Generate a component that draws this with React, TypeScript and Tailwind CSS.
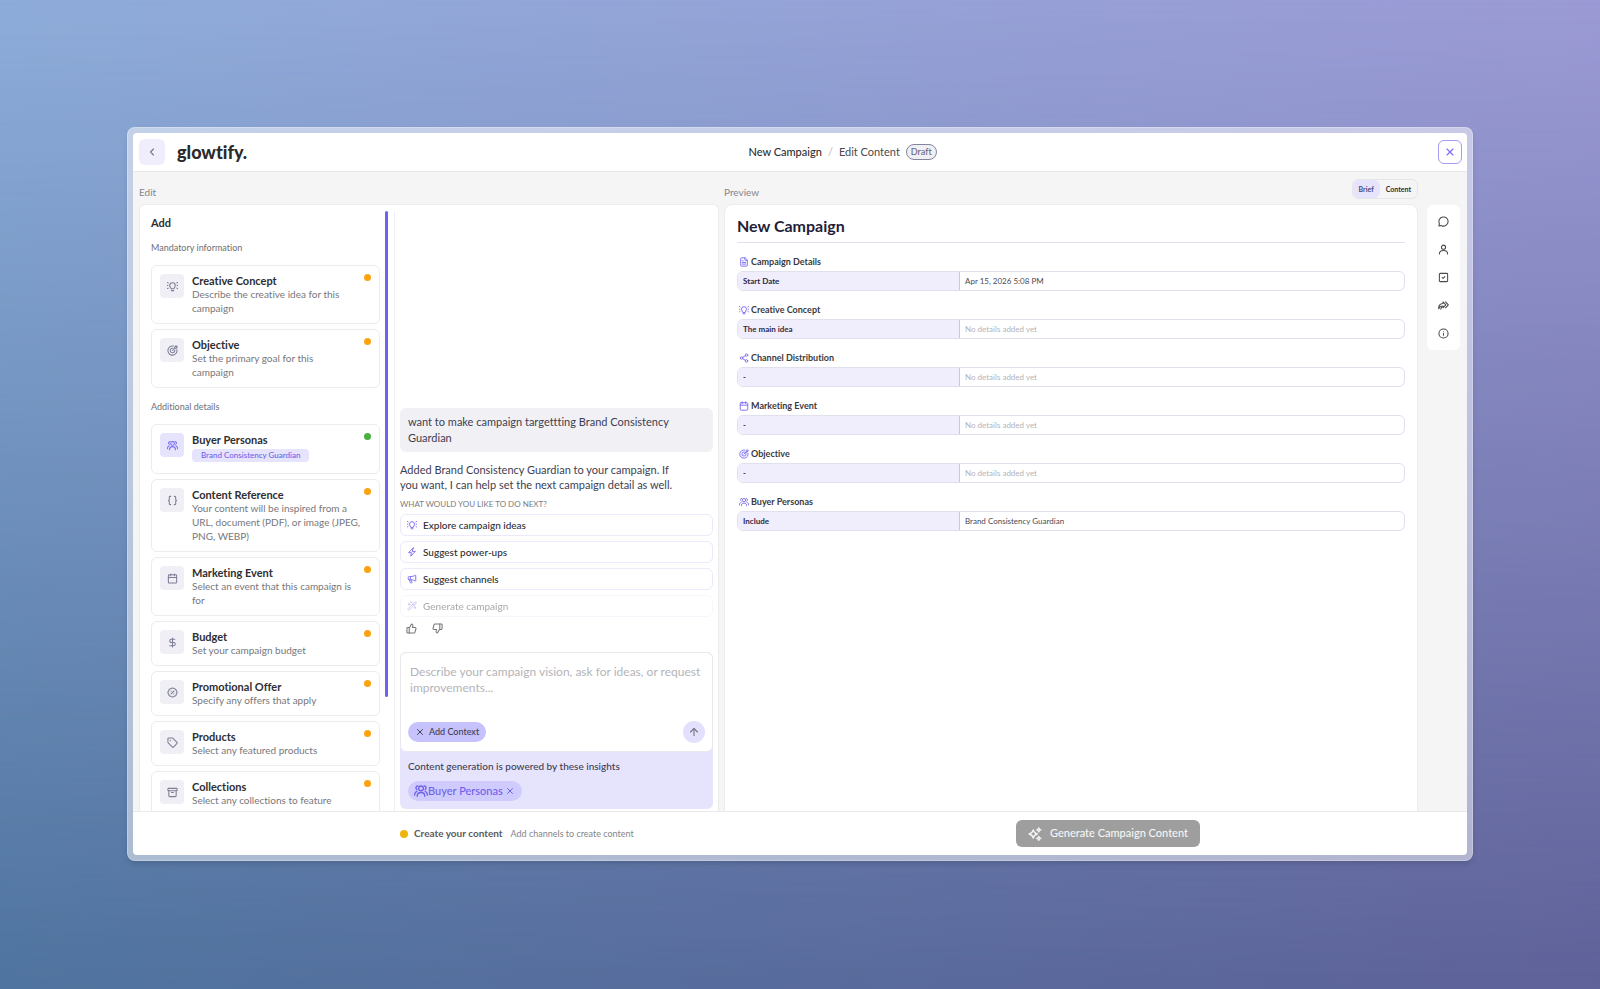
import React, {useState} from "react";
import {
    Archive,
    ArrowUp,
    BadgePercent,
    Braces,
    Calendar,
    ChevronLeft,
    DollarSign,
    FileText,
    Info,
    Megaphone,
    MessageCircle,
    Share2,
    SquareCheck,
    Tag,
    ThumbsDown,
    ThumbsUp,
    WandSparkles,
    X
} from "lucide-react";

type IconProps = { className?: string };
type IconType = React.ComponentType<IconProps>;

const Svg = ({className, children}: IconProps & { children: React.ReactNode }) => (
    <svg
        className={className}
        viewBox="0 0 24 24"
        fill="none"
        stroke="currentColor"
        strokeWidth={2}
        strokeLinecap="round"
        strokeLinejoin="round"
        aria-hidden="true"
    >
        {children}
    </svg>
);

const Bulb = ({className}: IconProps) => (
    <Svg className={className}>
        <path d="M9 17c0-2-3-3.200-3-7a6 6 0 0 1 12 0c0 3.800-3 5-3 7z"/>
        <path d="M9.500 21h5"/>
        <path d="M2.500 4.500 1 3.500M2 10H.5M2.500 15.500 1 16.500M21.500 4.500 23 3.500M22 10h1.500M21.500 15.500 23 16.500"/>
    </Svg>
);

const Goal = ({className}: IconProps) => (
    <Svg className={className}>
        <path d="M14 2.300A10 10 0 1 0 21.700 10"/>
        <path d="M13 7.100A5 5 0 1 0 16.900 11"/>
        <path d="m12 12 5-5M17 7V4l3-2.500V4h2.500L20 7z"/>
    </Svg>
);

const People = ({className}: IconProps) => (
    <Svg className={className}>
        <circle cx="12" cy="7.500" r="4"/>
        <path d="M5.500 21c0-4 2.500-6.500 6.500-6.500s6.500 2.500 6.500 6.500"/>
        <path d="M6.500 3.500a3.200 3.200 0 0 0-1.500 6M17.500 3.500a3.200 3.200 0 0 1 1.500 6"/>
        <path d="M5 12.500c-2.500.8-4 3-4 6.500M19 12.500c2.500.8 4 3 4 6.500"/>
    </Svg>
);

const Bolt = ({className}: IconProps) => (
    <Svg className={className}>
        <path d="M15 2 4 13.500h6.500L9 22l11-11.500h-6.500z"/>
    </Svg>
);

const Person = ({className}: IconProps) => (
    <Svg className={className}>
        <circle cx="12" cy="7" r="4.500"/>
        <path d="M3 22c0-5 3.500-8 9-8s9 3 9 8"/>
    </Svg>
);

const ForwardAll = ({className}: IconProps) => (
    <Svg className={className}>
        <path d="m11 4 6 6.500-6 6.500v-4c-5 0-8 2-9.500 6C1 12 4.500 8 11 7.500z"/>
        <path d="m16.500 4 6 6.500-6 6.500"/>
        <path d="M6 20c.5-2 1.500-3.500 3-4"/>
    </Svg>
);

const Sparkle = ({className}: IconProps) => (
    <Svg className={className}>
        <path d="M9 5c1 4 3 6 7 7-4 1-6 3-7 7-1-4-3-6-7-7 4-1 6-3 7-7z"/>
        <path d="M18.500 1.500c.5 2 1.500 3 3.500 3.500-2 .5-3 1.500-3.500 3.500C18 6.500 17 5.500 15 5c2-.5 3-1.500 3.500-3.500z"/>
        <path d="M18.500 16c.5 2 1.500 3 3.500 3.500-2 .5-3 1.500-3.500 3.500-.5-2-1.500-3-3.500-3.500 2-.5 3-1.500 3.500-3.500z"/>
    </Svg>
);

function InfoCard({item}: { item: CardItem }) {
    const Icon = item.icon;
    return (
        <button
            type="button"
            className="relative flex w-full shrink-0 items-start gap-2 rounded-md border border-[#ececef] bg-white p-2 text-left"
        >
            <span
                className={`flex size-6 shrink-0 items-center justify-center rounded ${item.chip ? "bg-[#e6e4fd] text-[#7c6ff0]" : "bg-[#efeff5] text-[#7d7d95]"}`}
            >
                <Icon className="size-[11px]"/>
            </span>
            <span className="min-w-0 flex-1 pr-2">
                <span className="block text-[11px] font-bold leading-[13px] text-[#2e2e33]">{item.title}</span>
                {item.chip ? (
                    <span
                        className="my-[3px] block w-fit rounded bg-[#e6e4fd] px-[9px] text-[8px] font-medium leading-[13px] text-[#6f62e8]">
                        {item.chip}
                    </span>
                ) : (
                    <span className="block text-[10px] leading-[14px] whitespace-pre-line text-[#77777c]">{item.text}</span>
                )}
            </span>
            <span
                className={`absolute top-2 right-2 size-[7px] rounded-full ${item.chip ? "bg-[#4caf3f]" : "bg-[#fba40f]"}`}/>
        </button>
    );
}

function BriefSection({section}: { section: Section }) {
    const Icon = section.icon;
    return (
        <section className="mb-2.5">
            <h3 className="flex h-[18px] items-center gap-[2px] pl-[2px] text-[9px] font-bold text-[#3a3a42]">
                <Icon className="size-[10px] text-[#7c6ff0]"/>
                {section.title}
            </h3>
            <table
                className="w-full table-fixed border-separate border-spacing-0 overflow-hidden rounded-md border border-[#e1e0ee] text-left text-[8px] leading-[18px]">
                <tbody>
                <tr>
                    <th scope="row"
                        className="w-1/3 border-r border-[#c9c5e6] bg-[#f0edfd] px-[5px] py-0 font-bold text-[#2c2a45]">
                        {section.label}
                    </th>
                    <td className={`px-[5px] py-0 ${section.value ? "text-[#4a4a55]" : "text-[#b4b4b8]"}`}>
                        {section.value ?? "No details added yet"}
                    </td>
                </tr>
                </tbody>
            </table>
        </section>
    );
}

export default function App() {
    const [tab, setTab] = useState("Brief");
    const [message, setMessage] = useState("");

    return (
        <main
            className="relative isolate flex h-screen bg-linear-to-r from-[#4f749f] to-[#5f6299] px-[127px] pt-[127px] pb-32 font-['Lato',sans-serif] [font-variant-ligatures:none] [&_svg]:stroke-[2.3]">
            <div
                className="absolute inset-0 -z-10 bg-linear-to-r from-[#8eacd9] to-[#9b9ad5] [mask-image:linear-gradient(to_bottom,black,transparent)]"/>
            <div className="flex min-w-0 flex-1 rounded-lg border border-white/25 bg-white/50 p-[5px] shadow-md">
                <div className="flex min-w-0 flex-1 flex-col overflow-hidden rounded bg-white">
                    <header
                        className="flex h-[39px] shrink-0 items-center justify-between border-b border-[#e9e9ea] pl-1.5 pr-[5px]">
                        <div className="flex items-center gap-3">
                            <button type="button" aria-label="Back"
                                    className="flex size-[26px] items-center justify-center rounded-md bg-[#f0edfd] text-[#77778a]">
                                <ChevronLeft className="size-3"/>
                            </button>
                            <a href="#" className="text-[18px] font-black leading-6 text-[#2b2b2b]">glowtify.</a>
                        </div>
                        <nav className="flex items-center gap-1.5 text-[11px] text-[#4a4a4f]">
                            <a href="#" className="font-medium text-[#2e2e33]">New Campaign</a>
                            <span className="text-[#b5b5bd]">/</span>
                            <span>Edit Content</span>
                            <span
                                className="rounded-full border border-[#85859a] bg-[#efeff6] px-1 text-[9px] font-medium leading-[14px] text-[#6a6a80]">
                                Draft
                            </span>
                        </nav>
                        <button type="button" aria-label="Close"
                                className="flex size-6 items-center justify-center rounded-md border border-[#a49cf3] text-[#7c6ff0]">
                            <X className="size-3"/>
                        </button>
                    </header>

                    <div className="flex min-h-0 flex-1 bg-[#f5f5f5] px-1.5">
                        <section className="flex w-[580px] shrink-0 flex-col">
                            <h2 className="h-8 shrink-0 pt-[13px] text-[10px] leading-[14px] text-[#85858a]">Edit</h2>
                            <div
                                className="flex min-h-0 flex-1 rounded-t-md border border-b-0 border-[#ececec] bg-white">
                                <div
                                    className="flex w-[240px] shrink-0 flex-col gap-[5px] overflow-hidden pl-[11px] pt-[10px]">
                                    <h3 className="text-[11px] font-bold leading-4 text-[#2e2e33]">Add</h3>
                                    <p className="mt-1.5 mb-1.5 text-[9px] leading-3 text-[#6f6f74]">Mandatory
                                        information</p>
                                    {mandatory.map((item) => <InfoCard key={item.title} item={item}/>)}
                                    <p className="mt-2 mb-1.5 text-[9px] leading-3 text-[#6f6f74]">Additional details</p>
                                    {additional.map((item) => <InfoCard key={item.title} item={item}/>)}
                                </div>
                                <div className="ml-[5px] mt-1.5 w-[10px] shrink-0 border-r border-[#f0f0f2]">
                                    <div className="h-[81%] w-[3px] rounded-full bg-[#6c63f0]"/>
                                </div>

                                <div className="flex min-w-0 flex-1 flex-col justify-end px-[5px] pb-[2px]">
                                    <p className="rounded-md bg-[#f0f0f5] px-2 py-1.5 text-[11px] leading-4 text-[#3e3e52]">
                                        want to make campaign targettting Brand Consistency Guardian
                                    </p>
                                    <p className="mt-[10px] pr-8 text-[11px] leading-[15px] text-[#3e3e52]">
                                        Added Brand Consistency Guardian to your campaign. If you want, I can help set
                                        the next campaign detail as well.
                                    </p>
                                    <p className="mt-1.5 mb-1 text-[8px] leading-3 text-[#7b7b80] uppercase">What would
                                        you like to do next?</p>
                                    <div className="flex flex-col gap-[5px]">
                                        {suggestions.map(({icon: Icon, title, disabled}) => (
                                            <button
                                                key={title}
                                                type="button"
                                                disabled={disabled}
                                                className="flex h-[22px] items-center gap-1.5 rounded-md border border-[#ebe9fa] px-1.5 text-[10px] font-medium text-[#2e2e33] disabled:opacity-40"
                                            >
                                                <Icon className="size-[10px] text-[#7c6ff0]"/>
                                                {title}
                                            </button>
                                        ))}
                                    </div>
                                    <div className="mt-1.5 mb-[18px] flex gap-[15px] pl-1.5 text-[#77777c]">
                                        <button type="button" aria-label="Good answer">
                                            <ThumbsUp className="size-[11px]"/>
                                        </button>
                                        <button type="button" aria-label="Bad answer">
                                            <ThumbsDown className="size-[11px]"/>
                                        </button>
                                    </div>

                                    <div className="rounded-md bg-[#e6e4fd]">
                                        <div
                                            className="rounded-md border border-[#e8e8ee] bg-white px-[7px] pt-[11px] pb-2">
                                            <textarea
                                                aria-label="Campaign vision"
                                                value={message}
                                                onChange={(e) => setMessage(e.target.value)}
                                                placeholder="Describe your campaign vision, ask for ideas, or request improvements..."
                                                className="block h-[57px] w-full resize-none px-0.5 text-[12px] leading-4 placeholder-[#b4b4b8] outline-none"
                                            />
                                            <div className="flex items-center justify-between">
                                                <button type="button"
                                                        className="flex h-5 items-center gap-1 rounded-full bg-[#c6c2fb] px-[7px] text-[9px] font-medium text-[#3e3e52]">
                                                    <X className="size-[10px]"/>
                                                    Add Context
                                                </button>
                                                <button type="button" aria-label="Send"
                                                        className="flex size-[22px] items-center justify-center rounded-full bg-[#e2e0fd] text-[#77778a]">
                                                    <ArrowUp className="size-3"/>
                                                </button>
                                            </div>
                                        </div>
                                        <div className="px-2 pt-1.5 pb-2">
                                            <p className="text-[10px] font-medium leading-4 text-[#3e3e52]">
                                                Content generation is powered by these insights
                                            </p>
                                            <span
                                                className="mt-[7px] inline-flex h-5 items-center rounded-full bg-[#cfcbfc] pl-1.5 pr-[7px] align-top text-[11px] font-medium text-[#6f62e8]">
                                                <People className="size-[14px]"/>
                                                Buyer Personas
                                                <button type="button" aria-label="Remove Buyer Personas"
                                                        className="ml-0.5">
                                                    <X className="size-[10px]"/>
                                                </button>
                                            </span>
                                        </div>
                                    </div>
                                </div>
                            </div>
                        </section>

                        <section className="ml-[5px] flex min-w-0 flex-1 flex-col">
                            <div className="flex h-8 shrink-0 items-start justify-between">
                                <h2 className="pt-[13px] text-[10px] leading-[14px] text-[#85858a]">Preview</h2>
                                <div
                                    className="mt-[7px] flex h-5 overflow-hidden rounded-md border border-[#e6e6ea] text-[7px] font-bold text-[#2e2e33]">
                                    {["Brief", "Content"].map((name) => (
                                        <button
                                            key={name}
                                            type="button"
                                            aria-pressed={tab === name}
                                            onClick={() => setTab(name)}
                                            className="rounded-md px-1.5 aria-pressed:bg-[#e6e4fd] aria-pressed:text-[#4b4679]"
                                        >
                                            {name}
                                        </button>
                                    ))}
                                </div>
                            </div>
                            <div
                                className="min-h-0 flex-1 rounded-t-lg border border-b-0 border-[#ececec] bg-white px-3 pt-3">
                                <h1 className="mb-2.5 border-b border-[#e1e0ee] pb-[7px] text-[16px] font-bold leading-[18px] text-[#1f1d3a]">
                                    New Campaign
                                </h1>
                                {sections.map((section) => <BriefSection key={section.title} section={section}/>)}
                            </div>
                        </section>

                        <aside
                            className="ml-[9px] mr-[1px] mt-[33px] flex w-[33px] flex-col items-center gap-[17px] self-start rounded-md bg-white py-[11px] text-[#4a4a4f]">
                            {tools.map(({icon: Icon, title}) => (
                                <button key={title} type="button" aria-label={title}>
                                    <Icon className="size-[11px]"/>
                                </button>
                            ))}
                        </aside>
                    </div>

                    <footer
                        className="flex h-[44px] shrink-0 items-center justify-between border-t border-[#e9e9ea] px-[267px]">
                        <div className="flex items-center gap-1.5">
                            <span className="size-2 rounded-full bg-[#edb50c]"/>
                            <p className="text-[10px] font-bold text-[#5b5b60]">Create your content</p>
                            <p className="pl-0.5 text-[9px] text-[#85858a]">Add channels to create content</p>
                        </div>
                        <button type="button"
                                className="flex h-[27px] items-center gap-2 rounded-md bg-[#9e9e9e] px-3 text-[11px] font-medium text-white/90">
                            <Sparkle className="size-[14px]"/>
                            Generate Campaign Content
                        </button>
                    </footer>
                </div>
            </div>
        </main>
    );
}

type CardItem = { icon: IconType; title: string; text?: string; chip?: string };
type Section = { icon: IconType; title: string; label: string; value?: string };

const mandatory: CardItem[] = [
    {icon: Bulb, title: "Creative Concept", text: "Describe the creative idea for this campaign"},
    {icon: Goal, title: "Objective", text: "Set the primary goal for this\ncampaign"}
];

const additional: CardItem[] = [
    {icon: People, title: "Buyer Personas", chip: "Brand Consistency Guardian"},
    {
        icon: Braces,
        title: "Content Reference",
        text: "Your content will be inspired from a\nURL, document (PDF), or image (JPEG, PNG, WEBP)"
    },
    {icon: Calendar, title: "Marketing Event", text: "Select an event that this campaign is\nfor"},
    {icon: DollarSign, title: "Budget", text: "Set your campaign budget"},
    {icon: BadgePercent, title: "Promotional Offer", text: "Specify any offers that apply"},
    {icon: Tag, title: "Products", text: "Select any featured products"},
    {icon: Archive, title: "Collections", text: "Select any collections to feature"}
];

const suggestions: { icon: IconType; title: string; disabled?: boolean }[] = [
    {icon: Bulb, title: "Explore campaign ideas"},
    {icon: Bolt, title: "Suggest power-ups"},
    {icon: Megaphone, title: "Suggest channels"},
    {icon: WandSparkles, title: "Generate campaign", disabled: true}
];

const sections: Section[] = [
    {icon: FileText, title: "Campaign Details", label: "Start Date", value: "Apr 15, 2026 5:08 PM"},
    {icon: Bulb, title: "Creative Concept", label: "The main idea"},
    {icon: Share2, title: "Channel Distribution", label: "-"},
    {icon: Calendar, title: "Marketing Event", label: "-"},
    {icon: Goal, title: "Objective", label: "-"},
    {icon: People, title: "Buyer Personas", label: "Include", value: "Brand Consistency Guardian"}
];

const tools: { icon: IconType; title: string }[] = [
    {icon: MessageCircle, title: "Comments"},
    {icon: Person, title: "People"},
    {icon: SquareCheck, title: "Tasks"},
    {icon: ForwardAll, title: "Share"},
    {icon: Info, title: "Info"}
];
